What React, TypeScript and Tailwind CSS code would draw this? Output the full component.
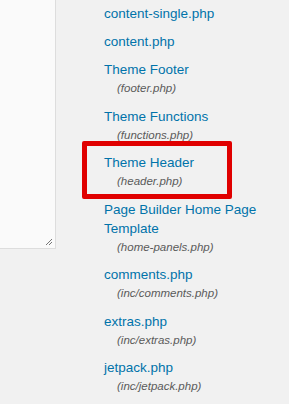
const files = [
  { title: 'content-single.php' },
  { title: 'content.php' },
  { title: 'Theme Footer', file: 'footer.php' },
  { title: 'Theme Functions', file: 'functions.php' },
  { title: 'Theme Header', file: 'header.php', highlight: true },
  { title: 'Page Builder Home Page Template', file: 'home-panels.php' },
  { title: 'comments.php', file: 'inc/comments.php' },
  { title: 'extras.php', file: 'inc/extras.php' },
  { title: 'jetpack.php', file: 'inc/jetpack.php' },
]

export default function App() {
  return (
    <div
      className="relative flex w-[289px] h-[404px] overflow-hidden bg-[#f1f1f1]"
      style={{ fontFamily: '"Liberation Sans", Arial, Helvetica, sans-serif' }}
    >
      {/* Editor textarea */}
      <div className="relative w-[56px] h-[249px] flex-shrink-0 bg-[#fafafa] border-r border-b border-[#dddddd]">
        <svg className="absolute right-[2px] bottom-[2px] w-[8px] h-[8px]" viewBox="0 0 8 8">
          <path d="M1 7 L7 1 M4 7 L7 4" stroke="#777" strokeWidth="1" />
        </svg>
      </div>

      {/* Template file list */}
      <ul className="pl-[48px] pt-[4px] w-[228px] flex-shrink-0">
        {files.map((f) => (
          <li key={f.title} className="mb-[9px]">
            <a className="block text-[13.5px] leading-[19px] text-[#0073aa]">{f.title}</a>
            {f.file && (
              <span className="block pl-[13px] text-[11.5px] leading-[18.5px] italic text-[#5a5a5a]">
                ({f.file})
              </span>
            )}
          </li>
        ))}
      </ul>

      {/* Highlight annotation */}
      <div className="absolute left-[82px] top-[141px] w-[150px] h-[58px] border-[5.5px] border-[#e00000] rounded-[2px]" />
    </div>
  )
}
